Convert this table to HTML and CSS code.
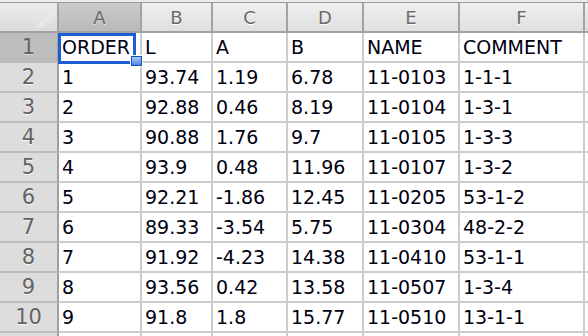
FILE: index.html
```html
<!DOCTYPE html>
<html>
<head>
<meta charset="utf-8">
<link rel="stylesheet" href="styles.css">
</head>
<body>
<div class="sheet">
  <div class="topline"></div>
  <div class="grid">
    <div class="corner"><svg width="59" height="30" viewBox="0 0 59 30"><defs><linearGradient id="tg" x1="0" y1="0" x2="1" y2="1"><stop offset="0" stop-color="#ffffff"/><stop offset="1" stop-color="#d8d8d8"/></linearGradient></defs><polygon points="35,24 53,24 53,9" fill="url(#tg)"/></svg></div>
    <div class="ch sel-ch">A</div><div class="ch">B</div><div class="ch">C</div><div class="ch">D</div><div class="ch">E</div><div class="ch">F</div><div class="ch last"></div>

    <div class="rh sel-rh">1</div><div class="c a1">ORDER<span class="selbox"></span><span class="handle"></span></div><div class="c">L</div><div class="c">A</div><div class="c">B</div><div class="c">NAME</div><div class="c">COMMENT</div><div class="c"></div>
    <div class="rh">2</div><div class="c">1</div><div class="c">93.74</div><div class="c">1.19</div><div class="c">6.78</div><div class="c">11-0103</div><div class="c">1-1-1</div><div class="c"></div>
    <div class="rh">3</div><div class="c">2</div><div class="c">92.88</div><div class="c">0.46</div><div class="c">8.19</div><div class="c">11-0104</div><div class="c">1-3-1</div><div class="c"></div>
    <div class="rh">4</div><div class="c">3</div><div class="c">90.88</div><div class="c">1.76</div><div class="c">9.7</div><div class="c">11-0105</div><div class="c">1-3-3</div><div class="c"></div>
    <div class="rh">5</div><div class="c">4</div><div class="c">93.9</div><div class="c">0.48</div><div class="c">11.96</div><div class="c">11-0107</div><div class="c">1-3-2</div><div class="c"></div>
    <div class="rh">6</div><div class="c">5</div><div class="c">92.21</div><div class="c">-1.86</div><div class="c">12.45</div><div class="c">11-0205</div><div class="c">53-1-2</div><div class="c"></div>
    <div class="rh">7</div><div class="c">6</div><div class="c">89.33</div><div class="c">-3.54</div><div class="c">5.75</div><div class="c">11-0304</div><div class="c">48-2-2</div><div class="c"></div>
    <div class="rh">8</div><div class="c">7</div><div class="c">91.92</div><div class="c">-4.23</div><div class="c">14.38</div><div class="c">11-0410</div><div class="c">53-1-1</div><div class="c"></div>
    <div class="rh">9</div><div class="c">8</div><div class="c">93.56</div><div class="c">0.42</div><div class="c">13.58</div><div class="c">11-0507</div><div class="c">1-3-4</div><div class="c"></div>
    <div class="rh">10</div><div class="c">9</div><div class="c">91.8</div><div class="c">1.8</div><div class="c">15.77</div><div class="c">11-0510</div><div class="c">13-1-1</div><div class="c"></div>
    <div class="rh"></div><div class="c"></div><div class="c"></div><div class="c"></div><div class="c"></div><div class="c"></div><div class="c"></div><div class="c"></div>
  </div>
</div>
</body>
</html>
```
FILE: styles.css
```css
html, body {
  margin: 0;
  padding: 0;
  background: #ffffff;
  overflow: hidden;
}
.sheet {
  width: 588px;
  height: 336px;
  overflow: hidden;
}
.topline {
  height: 2px;
  background: #ececec;
  border-bottom: 1px solid #9a9a9a;
}
.grid {
  display: grid;
  grid-template-columns: 59px 83px 71px 75px 76px 96px 125px 40px;
  grid-auto-rows: 30px;
}
.grid > div {
  box-sizing: border-box;
  border-right: 2px solid #cdcdcd;
  border-bottom: 2px solid #cdcdcd;
}
.corner {
  background: linear-gradient(#ececec, #dcdcdc);
  border-right-color: #a2a2a2 !important;
  border-bottom-color: #a2a2a2 !important;
}
.corner svg { display: block; }
.ch {
  background: linear-gradient(#efefef, #dfdfdf);
  border-right-color: #a2a2a2 !important;
  border-bottom-color: #a2a2a2 !important;
  font-family: "DejaVu Sans", sans-serif;
  font-size: 18px;
  color: #6a6a6a;
  text-shadow: 0 1px 0 #ffffff;
  display: flex;
  align-items: center;
  justify-content: center;
}
.sel-ch {
  background: linear-gradient(#cbcbcb, #b9b9b9);
  text-shadow: 0 1px 0 #e8e8e8;
}
.rh {
  background: #dddddd;
  border-right-color: #a0a0a0 !important;
  border-bottom-color: #bcbcbc !important;
  font-family: "DejaVu Sans", sans-serif;
  font-size: 21px;
  color: #636363;
  text-shadow: 0 1px 0 #f6f6f6;
  display: flex;
  align-items: center;
  justify-content: center;
}
.sel-rh {
  background: #bdbdbd;
  text-shadow: 0 1px 0 #dadada;
}
.c {
  font-family: "DejaVu Sans", sans-serif;
  font-size: 19px;
  color: #000010;
  padding-left: 3px;
  display: flex;
  align-items: center;
  white-space: nowrap;
  overflow: visible;
}
.a1 { position: relative; }
.selbox {
  position: absolute;
  left: -1px;
  top: 0;
  width: 78px;
  height: 31px;
  box-sizing: border-box;
  border: 3px solid #1c5ed4;
  z-index: 2;
}
.handle {
  position: absolute;
  left: 72px;
  top: 23px;
  width: 11px;
  height: 10px;
  box-sizing: border-box;
  border: 1px solid #1650c0;
  background: linear-gradient(#a9c8f4, #4f8ae2);
  box-shadow: 0 0 0 1px #ffffff;
  z-index: 3;
}
```
